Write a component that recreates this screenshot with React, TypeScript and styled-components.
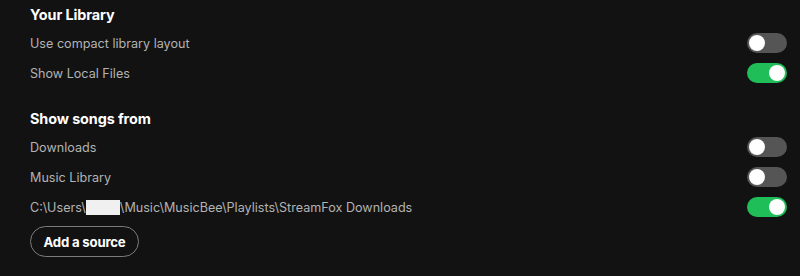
import React from "react";
import styled, { createGlobalStyle } from "styled-components";

const GlobalStyle = createGlobalStyle`
  html, body {
    margin: 0;
    padding: 0;
    background: #121212;
  }
  body {
    font-family: Inter, "Noto Sans", "Liberation Sans", sans-serif;
    -webkit-font-smoothing: antialiased;
  }
`;

const Page = styled.div`
  width: 800px;
  height: 276px;
  box-sizing: border-box;
  padding: 0 13px 0 30px;
  background: #121212;
  display: flex;
  flex-direction: column;
`;

const Section = styled.section<{ $gap?: number }>`
  display: flex;
  flex-direction: column;
  margin-top: ${(p) => p.$gap ?? 0}px;
`;

const Heading = styled.h2`
  margin: 0;
  height: 28px;
  display: flex;
  align-items: center;
  font-size: 14.4px;
  font-weight: 700;
  color: #ffffff;
  letter-spacing: -0.1px;
`;

const Row = styled.div`
  height: 30px;
  display: flex;
  align-items: center;
  justify-content: space-between;
`;

const Label = styled.span`
  font-size: 12.6px;
  color: #b3b3b3;
  display: flex;
  align-items: center;
`;

const Redacted = styled.span`
  display: inline-block;
  width: 34px;
  height: 15px;
  background: #f0f0f0;
`;

const Track = styled.button<{ $on: boolean }>`
  width: 40px;
  height: 20px;
  padding: 2px;
  border: none;
  border-radius: 10px;
  background: ${(p) => (p.$on ? "#1fbe58" : "#555555")};
  display: flex;
  justify-content: ${(p) => (p.$on ? "flex-end" : "flex-start")};
  cursor: pointer;
`;

const Knob = styled.span`
  width: 16px;
  height: 16px;
  border-radius: 50%;
  background: #ffffff;
`;

const AddButton = styled.button`
  margin-top: 4px;
  align-self: flex-start;
  height: 31px;
  width: 109px;
  box-sizing: border-box;
  border: 1px solid #7c7c7c;
  border-radius: 16px;
  background: transparent;
  color: #ffffff;
  font-family: inherit;
  font-size: 13.2px;
  font-weight: 700;
  letter-spacing: -0.2px;
  cursor: pointer;
`;

const Toggle = ({ on }: { on: boolean }) => (
  <Track $on={on} aria-pressed={on}>
    <Knob />
  </Track>
);

export default function App() {
  return (
    <>
      <GlobalStyle />
      <Page>
        <Section>
          <Heading>Your Library</Heading>
          <Row>
            <Label>Use compact library layout</Label>
            <Toggle on={false} />
          </Row>
          <Row>
            <Label>Show Local Files</Label>
            <Toggle on={true} />
          </Row>
        </Section>
        <Section $gap={16}>
          <Heading>Show songs from</Heading>
          <Row>
            <Label>Downloads</Label>
            <Toggle on={false} />
          </Row>
          <Row>
            <Label>Music Library</Label>
            <Toggle on={false} />
          </Row>
          <Row>
            <Label>
              C:\Users\<Redacted />\Music\MusicBee\Playlists\StreamFox Downloads
            </Label>
            <Toggle on={true} />
          </Row>
          <AddButton>Add a source</AddButton>
        </Section>
      </Page>
    </>
  );
}
